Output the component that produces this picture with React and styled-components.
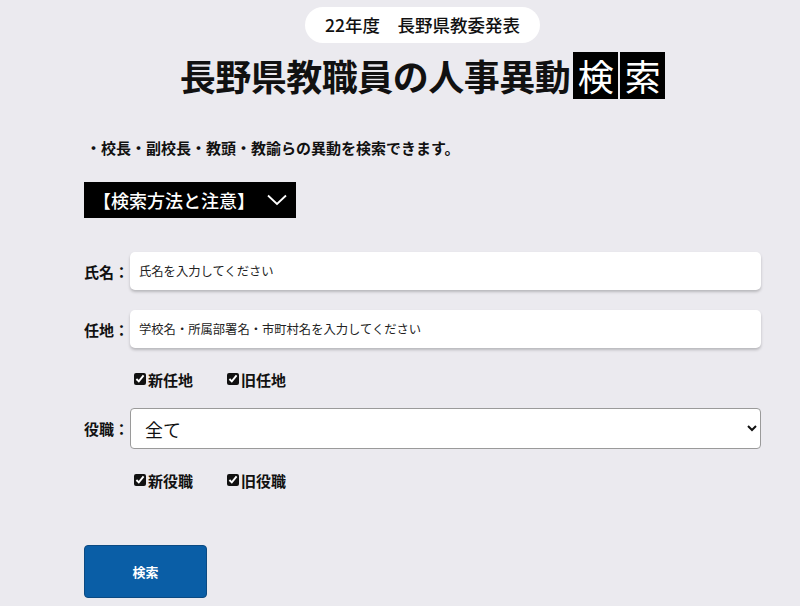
import React from 'react';
import styled, { createGlobalStyle } from 'styled-components';

const GlobalStyle = createGlobalStyle`
  html, body {
    margin: 0;
    padding: 0;
    background: #ebeaef;
  }
  body {
    font-family: 'Noto Sans CJK JP', 'Noto Sans', sans-serif;
    color: #111;
  }
`;

const Page = styled.main`
  width: 677px;
  margin-left: 84px;
  padding-top: 7px;
`;

const Header = styled.header`
  display: flex;
  flex-direction: column;
  align-items: center;
`;

const Pill = styled.div`
  height: 36px;
  line-height: 36px;
  padding: 0 20px;
  border-radius: 18px;
  background: #fff;
  font-size: 17.5px;
  font-weight: 500;
  white-space: pre;
`;

const Title = styled.h1`
  display: flex;
  align-items: center;
  gap: 2px;
  margin: 9px 0 0;
  font-size: 36px;
  font-weight: 700;
  line-height: 47px;
  letter-spacing: -0.5px;
`;

const TitleBox = styled.span`
  display: inline-block;
  width: 45px;
  height: 47px;
  background: #000;
  color: #fff;
  font-weight: 400;
  text-align: center;
  letter-spacing: 0;
  margin-left: ${p => (p.first ? '1px' : '0')};
`;

const Note = styled.p`
  margin: 38px 0 0 2px;
  font-size: 15px;
  font-weight: 700;
  line-height: 22px;
`;

const AccordionButton = styled.button`
  display: flex;
  align-items: center;
  gap: 12px;
  margin-top: 23px;
  height: 36px;
  width: 212px;
  padding: 0 0 0 9px;
  border: none;
  background: #000;
  color: #fff;
  font-family: inherit;
  font-size: 18px;
  font-weight: 500;
  cursor: pointer;
`;

const Form = styled.form`
  display: flex;
  flex-direction: column;
  margin-top: 34px;
`;

const Row = styled.div`
  display: flex;
  align-items: center;
  margin-top: ${p => p.gap || 0}px;
`;

const Label = styled.label`
  width: 46px;
  flex: none;
  font-size: 15px;
  font-weight: 700;
  white-space: nowrap;
`;

const TextInput = styled.input`
  flex: 1;
  height: 38px;
  box-sizing: border-box;
  padding: 0 9px;
  border: none;
  border-radius: 5px;
  background: #fff;
  box-shadow: 0 2px 3px rgba(0, 0, 0, 0.22);
  font-family: inherit;
  font-size: 12.3px;
  color: #111;
  outline: none;

  &::placeholder {
    color: #222;
  }
`;

const Select = styled.select`
  flex: 1;
  height: 41px;
  box-sizing: border-box;
  padding: 0 8px 0 10px;
  border: 1px solid #9a9a9a;
  border-radius: 4px;
  background: #fff;
  font-family: inherit;
  font-size: 18px;
  color: #111;
`;

const CheckRow = styled.div`
  display: flex;
  gap: 34px;
  height: 20px;
  align-items: center;
  margin-top: ${p => p.gap}px;
  padding-left: 50px;
`;

const CheckLabel = styled.label`
  display: flex;
  align-items: center;
  gap: 2px;
  font-size: 15px;
  font-weight: 700;

  input {
    width: 12px;
    height: 12px;
    margin: 0;
    accent-color: #111;
  }
`;

const SubmitButton = styled.button`
  margin-top: 55px;
  width: 123px;
  height: 53px;
  border: 1px solid #0b4a82;
  border-radius: 4px;
  background: #0a5ea6;
  color: #fff;
  font-family: inherit;
  font-size: 13px;
  font-weight: 700;
  cursor: pointer;
`;

const Chevron = () => (
  <svg width="20" height="12" viewBox="0 0 20 12" fill="none">
    <path d="M1 1.5 L10 10 L19 1.5" stroke="#fff" strokeWidth="1.8" />
  </svg>
);

function Check({ children }) {
  return (
    <CheckLabel>
      <input type="checkbox" defaultChecked />
      {children}
    </CheckLabel>
  );
}

export default function App() {
  return (
    <>
      <GlobalStyle />
      <Page>
        <Header>
          <Pill>22年度　長野県教委発表</Pill>
          <Title>
            長野県教職員の人事異動
            <TitleBox first>検</TitleBox>
            <TitleBox>索</TitleBox>
          </Title>
        </Header>

        <Note>・校長・副校長・教頭・教諭らの異動を検索できます。</Note>

        <AccordionButton type="button">
          【検索方法と注意】
          <Chevron />
        </AccordionButton>

        <Form onSubmit={e => e.preventDefault()}>
          <Row>
            <Label htmlFor="name">氏名：</Label>
            <TextInput id="name" placeholder="氏名を入力してください" />
          </Row>
          <Row gap={20}>
            <Label htmlFor="place">任地：</Label>
            <TextInput id="place" placeholder="学校名・所属部署名・市町村名を入力してください" />
          </Row>
          <CheckRow gap={21}>
            <Check>新任地</Check>
            <Check>旧任地</Check>
          </CheckRow>
          <Row gap={19}>
            <Label htmlFor="post">役職：</Label>
            <Select id="post" defaultValue="all">
              <option value="all">全て</option>
              <option value="kocho">校長</option>
              <option value="fuku">副校長</option>
              <option value="kyoto">教頭</option>
              <option value="kyoyu">教諭</option>
            </Select>
          </Row>
          <CheckRow gap={21}>
            <Check>新役職</Check>
            <Check>旧役職</Check>
          </CheckRow>
          <div>
            <SubmitButton type="submit">検索</SubmitButton>
          </div>
        </Form>
      </Page>
    </>
  );
}
